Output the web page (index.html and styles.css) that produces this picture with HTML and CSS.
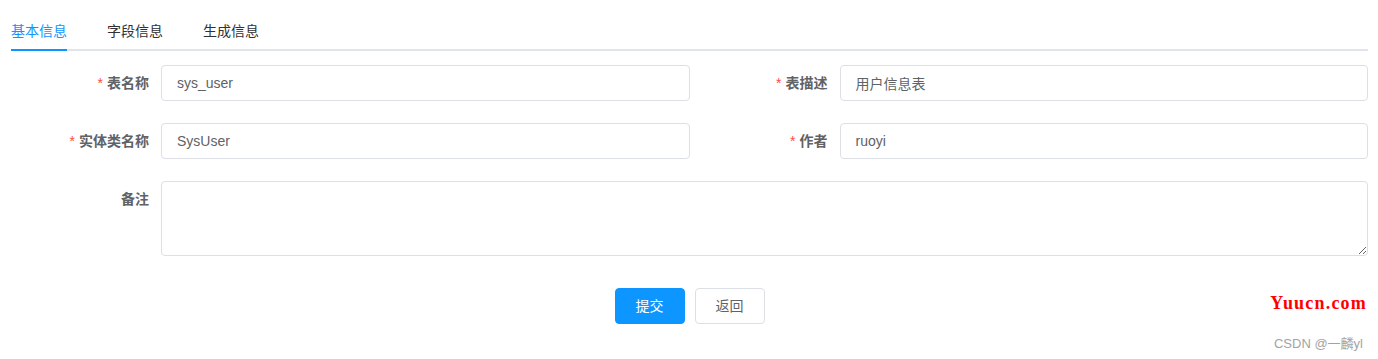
FILE: index.html
```html
<!DOCTYPE html>
<html lang="zh">
<head>
<meta charset="utf-8">
<title>基本信息</title>
<link rel="stylesheet" href="styles.css">
</head>
<body>
<div class="page">
  <div class="tabs">
    <div class="tab-nav">
      <div class="tab active">基本信息</div>
      <div class="tab">字段信息</div>
      <div class="tab">生成信息</div>
    </div>
  </div>
  <form class="form">
    <div class="row">
      <div class="item">
        <label class="label"><span class="req">*</span>表名称</label>
        <input class="input" type="text" value="sys_user">
      </div>
      <div class="item">
        <label class="label"><span class="req">*</span>表描述</label>
        <input class="input" type="text" value="用户信息表">
      </div>
    </div>
    <div class="row">
      <div class="item">
        <label class="label"><span class="req">*</span>实体类名称</label>
        <input class="input" type="text" value="SysUser">
      </div>
      <div class="item">
        <label class="label"><span class="req">*</span>作者</label>
        <input class="input" type="text" value="ruoyi">
      </div>
    </div>
    <div class="row">
      <div class="item full">
        <label class="label">备注</label>
        <textarea class="textarea" rows="3"></textarea>
      </div>
    </div>
    <div class="actions">
      <button type="button" class="btn primary">提交</button>
      <button type="button" class="btn">返回</button>
    </div>
  </form>
  <div class="wm-site">Yuucn.com</div>
  <div class="wm-csdn">CSDN @一麟yl</div>
</div>
</body>
</html>
```
FILE: styles.css
```css
* { box-sizing: border-box; }
html, body { margin: 0; padding: 0; background: #fff; }
body {
  font-family: "Liberation Sans", "Noto Sans CJK SC", sans-serif;
  font-size: 14px;
  color: #606266;
}
.page {
  position: relative;
  width: 1378px;
  height: 359px;
  padding: 11px 10px 0 11px;
}
.tabs {
  position: relative;
  height: 40px;
  margin-bottom: 14px;
}
.tabs::after {
  content: "";
  position: absolute;
  left: 0;
  right: 0;
  bottom: 0;
  height: 2px;
  background: #dfe4ed;
}
.tab-nav { display: flex; height: 40px; }
.tab {
  position: relative;
  height: 40px;
  line-height: 40px;
  padding: 0 20px;
  color: #303133;
  font-size: 14px;
}
.tab:first-child { padding-left: 0; }
.tab.active { color: #0d96ff; }
.tab.active::after {
  content: "";
  position: absolute;
  left: 0;
  right: 20px;
  bottom: 0;
  height: 2px;
  background: #0d96ff;
  z-index: 1;
}
.form { margin: 0; }
.row {
  display: flex;
  margin-bottom: 22px;
}
.item {
  flex: 1 1 0;
  display: flex;
  align-items: flex-start;
}
.label {
  flex: 0 0 150px;
  width: 150px;
  padding-right: 12px;
  text-align: right;
  line-height: 36px;
  font-weight: bold;
  color: #606266;
  font-size: 14px;
}
.req {
  color: #ff4949;
  margin-right: 4px;
  font-weight: normal;
}
.input {
  flex: 1 1 auto;
  min-width: 0;
  height: 36px;
  border: 1px solid #dcdfe6;
  border-radius: 4px;
  padding: 0 15px;
  font-family: inherit;
  font-size: 14px;
  color: #606266;
  outline: none;
  background: #fff;
}
.textarea {
  flex: 1 1 auto;
  min-width: 0;
  height: 75px;
  border: 1px solid #dcdfe6;
  border-radius: 4px;
  padding: 5px 15px;
  font-family: inherit;
  font-size: 14px;
  line-height: 1.5;
  color: #606266;
  outline: none;
  resize: vertical;
}
.actions {
  display: flex;
  justify-content: center;
  gap: 10px;
  padding-top: 10px;
}
.btn {
  height: 36px;
  padding: 0 20px;
  border: 1px solid #dcdfe6;
  border-radius: 4px;
  background: #fff;
  color: #606266;
  font-family: inherit;
  font-size: 14px;
  line-height: 34px;
}
.btn.primary {
  background: #0d96ff;
  border-color: #0d96ff;
  color: #fff;
}
.wm-site {
  position: absolute;
  right: 11px;
  top: 293px;
  font-family: "Liberation Serif", "DejaVu Serif", serif;
  font-weight: bold;
  font-size: 18px;
  letter-spacing: 1.2px;
  color: #ff0000;
}
.wm-csdn {
  position: absolute;
  right: 15px;
  top: 333px;
  font-family: "Liberation Sans", "Noto Sans CJK SC", sans-serif;
  font-size: 13px;
  color: #a3a3a3;
}
```
